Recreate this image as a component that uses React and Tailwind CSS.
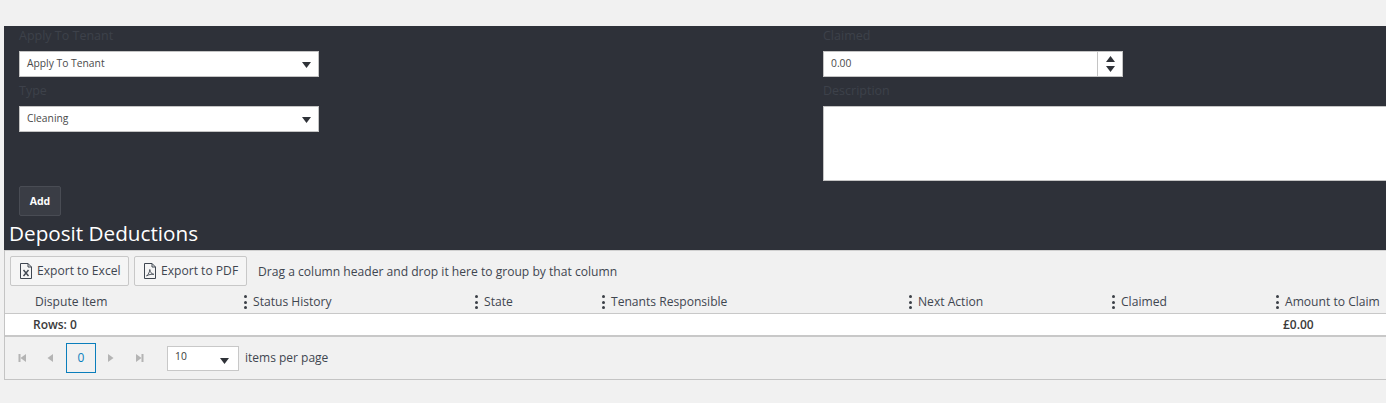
import React from "react";

const COLUMNS = [
  { title: "Dispute Item", cls: "w-[239px] pl-[30px]" },
  { title: "Status History", cls: "w-[231px]", dots: true },
  { title: "State", cls: "w-[127px]", dots: true },
  { title: "Tenants Responsible", cls: "w-[307px]", dots: true },
  { title: "Next Action", cls: "w-[203px]", dots: true },
  { title: "Claimed", cls: "w-[164px]", dots: true },
  { title: "Amount to Claim", cls: "flex-1", dots: true },
];

function Caret({ up = false, className = "" }) {
  return (
    <svg width="9" height="6" viewBox="0 0 9 6" className={className}>
      <path d={up ? "M4.5 0 L9 6 L0 6 Z" : "M0 0 L9 0 L4.5 6 Z"} fill="#2f3238" />
    </svg>
  );
}

function Select({ value }) {
  return (
    <div className="flex h-[26px] w-[300px] items-center justify-between border border-[#c4c4c4] bg-white pl-[7px] pr-[7px] text-[10.3px] text-[#4a4a4a]">
      <span className="mt-[-1px]">{value}</span>
      <Caret className="mt-[2px]" />
    </div>
  );
}

function Label({ children }) {
  return <div className="h-[25px] text-[12.5px] leading-[19px] text-[#3d414a]">{children}</div>;
}

function Dots() {
  return (
    <span className="mr-[6px] flex h-[14px] w-[3px] flex-col justify-between">
      <i className="block h-[3px] w-[3px] rounded-full bg-[#3b3f46]" />
      <i className="block h-[3px] w-[3px] rounded-full bg-[#3b3f46]" />
      <i className="block h-[3px] w-[3px] rounded-full bg-[#3b3f46]" />
    </span>
  );
}

function ExportButton({ label, width, children }) {
  return (
    <div className={`flex h-[30px] items-center gap-[4px] whitespace-nowrap rounded-[2px] border border-[#c8c8c8] bg-[#f5f5f5] pl-[8px] text-[12.1px] text-[#3f4650] ${width}`}>
      {children}
      <span>{label}</span>
    </div>
  );
}

function PageArrow({ dir, edge }) {
  const tri = dir === "left" ? "M8 1 L8 9 L2.5 5 Z" : "M2 1 L2 9 L7.5 5 Z";
  return (
    <svg width="10" height="10" viewBox="0 0 10 10">
      <path d={tri} fill="#b4b4b4" />
      {edge && <rect x={dir === "left" ? 0.5 : 7.5} y="1" width="2" height="8" fill="#b4b4b4" />}
    </svg>
  );
}

export default function App() {
  return (
    <div className="h-[403px] w-[1386px] overflow-hidden bg-[#f1f1f1] pl-[4px] pt-[26px] font-['Open_Sans','Noto_Sans',sans-serif]">
      {/* dark form panel */}
      <div className="h-[224px] bg-[#2e3139]">
        <div className="flex h-[160px]">
          <div className="w-[819px] shrink-0 pl-[15px]">
            <Label>Apply To Tenant</Label>
            <Select value="Apply To Tenant" />
            <div className="h-[4px]" />
            <Label>Type</Label>
            <Select value="Cleaning" />
          </div>
          <div className="flex-1">
            <Label>Claimed</Label>
            <div className="flex h-[26px] w-[300px] border border-[#c4c4c4] bg-white text-[10.3px] text-[#4a4a4a]">
              <div className="mt-[-1px] flex flex-1 items-center pl-[7px]">0.00</div>
              <div className="flex w-[25px] flex-col items-center justify-center gap-[4px] border-l border-[#c4c4c4]">
                <Caret up />
                <Caret />
              </div>
            </div>
            <div className="h-[4px]" />
            <Label>Description</Label>
            <div className="h-[75px] border-y border-l border-[#c4c4c4] bg-white" />
          </div>
        </div>
        <div className="pl-[15px]">
          <div className="flex h-[30px] w-[42px] items-center justify-center rounded-[2px] border border-[#494c54] bg-[#3a3d45] pt-[1px] text-[10.5px] font-bold text-white">
            Add
          </div>
        </div>
        <h2 className="pl-[5px] pt-[4px] text-[20.7px] font-medium leading-[27px] text-white">Deposit Deductions</h2>
      </div>

      {/* grid */}
      <div className="h-[130px] border-b border-l border-[#c4c4c4]">
        <div className="flex h-[42px] items-center border-t border-[#d0d0d0] pb-[1px] pl-[5px]">
          <ExportButton label="Export to Excel" width="w-[119px]">
            <svg width="14" height="16" viewBox="0 0 14 16" fill="none" stroke="#3f4650">
              <path d="M1.5 0.5 H9 L12.5 4 V15.5 H1.5 Z M9 0.5 V4 H12.5" />
              <path d="M4.5 7 L9.5 13 M9.5 7 L4.5 13" strokeWidth="1.4" />
            </svg>
          </ExportButton>
          <div className="w-[5px]" />
          <ExportButton label="Export to PDF" width="w-[113px]">
            <svg width="14" height="16" viewBox="0 0 14 16" fill="none" stroke="#3f4650">
              <path d="M1.5 0.5 H9 L12.5 4 V15.5 H1.5 Z M9 0.5 V4 H12.5" />
              <path d="M3.5 13 C5.5 11.5 6.8 8.5 6.8 6.5 C7 9 8.5 11 10.8 11.3 C8.5 11 5.5 11.6 3.5 13 Z" strokeWidth="0.9" />
            </svg>
          </ExportButton>
          <span className="ml-[11px] mt-[3px] text-[12.1px] text-[#3f4650]">Drag a column header and drop it here to group by that column</span>
        </div>

        <div className="flex h-[22px] items-center border-b border-[#c8c8c8] text-[12.1px] text-[#3f4650]">
          {COLUMNS.map((c) => (
            <div key={c.title} className={`flex items-center whitespace-nowrap ${c.cls}`}>
              {c.dots && <Dots />}
              <span className="mt-[-1px]">{c.title}</span>
            </div>
          ))}
        </div>

        <div className="flex h-[23px] items-center border-b-[2px] border-[#c8c8c8] bg-white text-[12px] font-semibold text-[#3a3a3a]">
          <div className="w-[1278px] pl-[28px]">Rows: 0</div>
          <div>£0.00</div>
        </div>

        <div className="flex h-[42px] items-center text-[12px] text-[#3f4650]">
          <div className="flex w-[29px] justify-center pl-[6px]"><PageArrow dir="left" edge /></div>
          <div className="flex w-[32px] justify-center"><PageArrow dir="left" /></div>
          <div className="flex h-[30px] w-[30px] items-center justify-center border border-[#0a7ebc] text-[12px] text-[#0a7ebc]">0</div>
          <div className="flex w-[30px] justify-center"><PageArrow dir="right" /></div>
          <div className="flex w-[26px] justify-center"><PageArrow dir="right" edge /></div>
          <div className="ml-[15px] flex h-[25px] w-[72px] items-center justify-between border border-[#c8c8c8] bg-white pl-[7px] pr-[9px] text-[10.3px] text-[#3a3a3a]">
            <span className="mt-[-2px]">10</span>
            <Caret className="mt-[5px]" />
          </div>
          <span className="ml-[6px]">items per page</span>
        </div>
      </div>
    </div>
  );
}
